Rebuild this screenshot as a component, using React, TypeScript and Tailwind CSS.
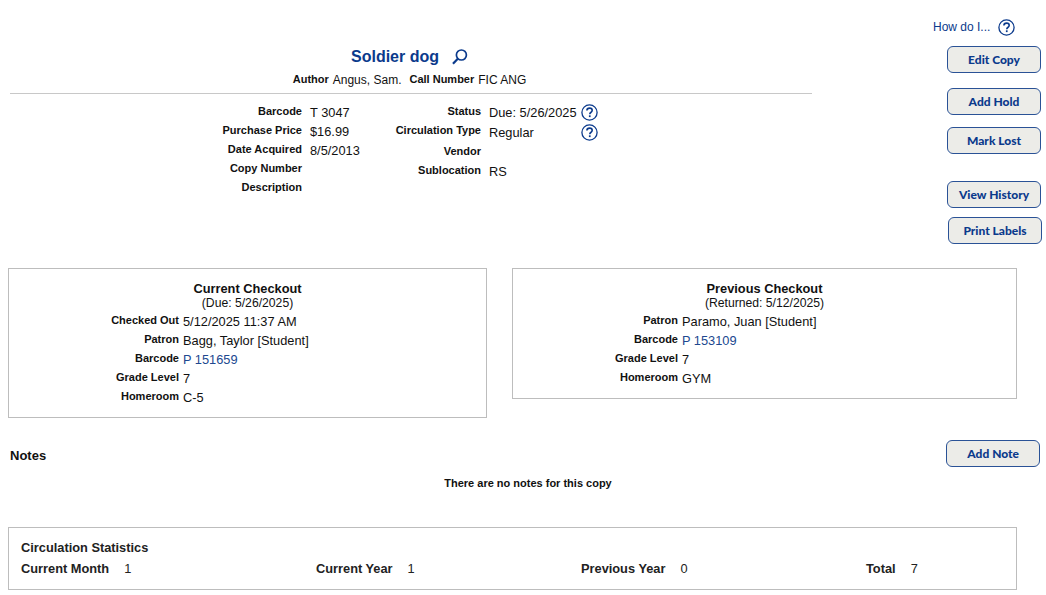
import type { ReactNode } from 'react'

const sans = 'font-["Liberation_Sans",Arial,sans-serif]'

function HelpIcon() {
  return (
    <svg width="17" height="17" viewBox="0 0 17 17" className="shrink-0">
      <circle cx="8.5" cy="8.5" r="7.6" fill="none" stroke="#0b3a8c" strokeWidth="1.3" />
      <path d="M5.9 6.6c0-1.6 1.2-2.5 2.7-2.5s2.6.9 2.6 2.2c0 1.1-.6 1.6-1.4 2.2-.7.5-1 .9-1 1.7" fill="none" stroke="#0b3a8c" strokeWidth="1.6" />
      <rect x="7.9" y="11.3" width="1.7" height="1.8" fill="#0b3a8c" />
    </svg>
  )
}

function ActionButton({ label, className = '' }: { label: string; className?: string }) {
  return (
    <button
      type="button"
      className={`block h-[27px] w-[94px] rounded-[6px] border border-[#2a5296] bg-[#ecece8] font-["Lato",sans-serif] text-[12px] font-black leading-[22px] text-[#0b3a8c] ${className}`}
    >
      {label}
    </button>
  )
}

function Row({ label, labelWidth, gap = 'ml-2', height = 'h-[19px]', children }: { label: string; labelWidth: string; gap?: string; height?: string; children?: ReactNode }) {
  return (
    <div className={`flex items-start ${height}`}>
      <span className={`${labelWidth} shrink-0 text-right text-[11px] font-bold leading-[17px] text-[#111]`}>{label}</span>
      <span className={`${gap} flex whitespace-nowrap text-[12.8px] leading-[20px] text-[#111]`}>{children}</span>
    </div>
  )
}

function CheckoutBox({ title, sub, className, children }: { title: string; sub: string; className: string; children: ReactNode }) {
  return (
    <section className={`border border-[#bdbdbd] ${className}`}>
      <h2 className="mt-[12px] text-center text-[12.8px] font-bold leading-[16px] text-[#111]">{title}</h2>
      <p className="text-center text-[12.2px] leading-[13px] text-[#111]">{sub}</p>
      <div className="mt-[2px]">{children}</div>
    </section>
  )
}

function Stat({ label, value, className }: { label: string; value: string; className: string }) {
  return (
    <div className={`flex text-[12.8px] font-bold leading-[16px] text-[#222] ${className}`}>
      <span>{label}</span>
      <span className="ml-[15px] font-normal">{value}</span>
    </div>
  )
}

export default function App() {
  return (
    <div className={`h-[595px] w-[1046px] overflow-hidden bg-white ${sans}`}>
      <div className="flex h-[268px]">
        <div className="ml-[10px] w-[802px] pt-[46px]">
          <div className="flex h-[22px] items-center justify-center pr-[2px]">
            <h1 className="text-[16px] font-bold leading-[22px] text-[#0b3a8c]">Soldier dog</h1>
            <svg width="18" height="18" viewBox="0 0 18 18" className="ml-[12px]">
              <circle cx="10.4" cy="7" r="5" fill="none" stroke="#0b3a8c" strokeWidth="1.7" />
              <path d="M6.8 10.8 2 15.8" fill="none" stroke="#0b3a8c" strokeWidth="2.2" />
            </svg>
          </div>
          <div className="mt-[2px] flex h-[20px] items-center justify-center pb-[1px] pr-[3px] text-[12px] text-[#111]">
            <span className="text-[11px] font-bold">Author</span>
            <span className="ml-1">Angus, Sam.</span>
            <span className="ml-2 text-[11px] font-bold">Call Number</span>
            <span className="ml-1">FIC ANG</span>
          </div>
          <div className="mt-[3px] border-t border-[#c8c8c8]" />
          <div className="mt-[9px] flex">
            <div className="w-[292px] shrink-0">
              <Row label="Barcode" labelWidth="w-[292px]">T 3047</Row>
              <Row label="Purchase Price" labelWidth="w-[292px]">$16.99</Row>
              <Row label="Date Acquired" labelWidth="w-[292px]">8/5/2013</Row>
              <Row label="Copy Number" labelWidth="w-[292px]" />
              <Row label="Description" labelWidth="w-[292px]" />
            </div>
            <div>
              <Row label="Status" labelWidth="w-[179px]">
                <span className="w-[92px]">Due: 5/26/2025</span>
                <span className="mt-[1px]"><HelpIcon /></span>
              </Row>
              <Row label="Circulation Type" labelWidth="w-[179px]" height="h-[21px]">
                <span className="mt-[1px] w-[92px]">Regular</span>
                <span className="mt-[2px]"><HelpIcon /></span>
              </Row>
              <Row label="Vendor" labelWidth="w-[179px]" />
              <Row label="Sublocation" labelWidth="w-[179px]">RS</Row>
            </div>
          </div>
        </div>
        <div className="ml-[21px] w-[213px]">
          <div className="mt-[18px] flex h-[18px] items-center">
            <a className="ml-[100px] text-[12px] leading-[16px] text-[#0b3a8c]">How do I...</a>
            <span className="ml-[8px] mt-[1px]"><HelpIcon /></span>
          </div>
          <ActionButton label="Edit Copy" className="ml-[114px] mt-[10px]" />
          <ActionButton label="Add Hold" className="ml-[114px] mt-[15px]" />
          <ActionButton label="Mark Lost" className="ml-[114px] mt-[12px]" />
          <ActionButton label="View History" className="ml-[114px] mt-[27px]" />
          <ActionButton label="Print Labels" className="ml-[115px] mt-[9px]" />
        </div>
      </div>

      <div className="ml-[8px] flex items-start">
        <CheckoutBox title="Current Checkout" sub="(Due: 5/26/2025)" className="h-[150px] w-[479px]">
          <Row label="Checked Out" labelWidth="w-[170px]" gap="ml-1">5/12/2025 11:37 AM</Row>
          <Row label="Patron" labelWidth="w-[170px]" gap="ml-1">Bagg, Taylor [Student]</Row>
          <Row label="Barcode" labelWidth="w-[170px]" gap="ml-1"><span className="text-[#20488f]">P 151659</span></Row>
          <Row label="Grade Level" labelWidth="w-[170px]" gap="ml-1">7</Row>
          <Row label="Homeroom" labelWidth="w-[170px]" gap="ml-1">C-5</Row>
        </CheckoutBox>
        <CheckoutBox title="Previous Checkout" sub="(Returned: 5/12/2025)" className="ml-[25px] h-[131px] w-[505px]">
          <Row label="Patron" labelWidth="w-[165px]" gap="ml-1">Paramo, Juan [Student]</Row>
          <Row label="Barcode" labelWidth="w-[165px]" gap="ml-1"><span className="text-[#20488f]">P 153109</span></Row>
          <Row label="Grade Level" labelWidth="w-[165px]" gap="ml-1">7</Row>
          <Row label="Homeroom" labelWidth="w-[165px]" gap="ml-1">GYM</Row>
        </CheckoutBox>
      </div>

      <div className="mt-[22px] flex h-[27px] items-center">
        <h2 className="ml-[10px] mt-[4px] text-[13px] font-bold leading-[16px] text-[#111]">Notes</h2>
        <ActionButton label="Add Note" className="ml-[900px]" />
      </div>
      <p className="mt-[9px] text-center text-[11px] font-bold leading-[14px] text-[#111] [text-indent:10px]">There are no notes for this copy</p>

      <section className="ml-[8px] mt-[37px] h-[63px] w-[1009px] border border-[#bdbdbd] px-[12px] pt-[12px]">
        <h2 className="text-[12.8px] font-bold leading-[16px] text-[#222]">Circulation Statistics</h2>
        <div className="mt-[5px] flex">
          <Stat label="Current Month" value="1" className="w-[295px]" />
          <Stat label="Current Year" value="1" className="w-[265px]" />
          <Stat label="Previous Year" value="0" className="w-[285px]" />
          <Stat label="Total" value="7" className="" />
        </div>
      </section>
    </div>
  )
}
